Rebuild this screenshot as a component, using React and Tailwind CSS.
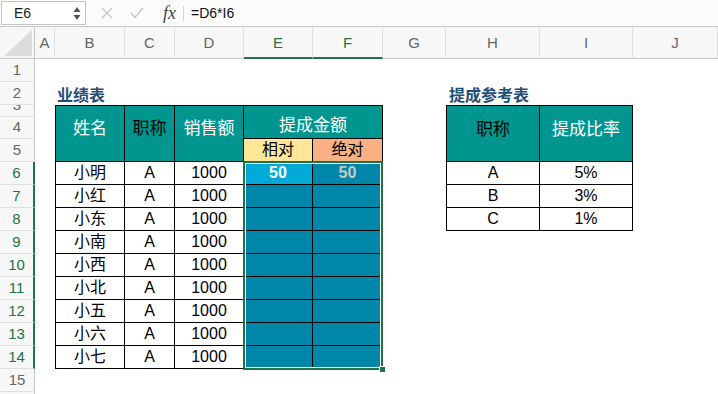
import React from "react";

const C = {
  rh: "col-start-1",
  A: "col-start-2",
  B: "col-start-3",
  Cc: "col-start-4",
  D: "col-start-5",
  E: "col-start-6",
  F: "col-start-7",
  G: "col-start-8",
  H: "col-start-9",
  I: "col-start-10",
  J: "col-start-11",
};
const R = [
  "row-start-1",
  "row-start-2",
  "row-start-3",
  "row-start-4",
  "row-start-5",
  "row-start-6",
  "row-start-7",
  "row-start-8",
  "row-start-9",
  "row-start-10",
  "row-start-11",
  "row-start-12",
  "row-start-13",
  "row-start-14",
  "row-start-15",
  "row-start-16",
  "row-start-17",
];

const GREEN = "border-[#217346]";

const colHeaders = [
  ["A", C.A],
  ["B", C.B],
  ["C", C.Cc],
  ["D", C.D],
  ["E", C.E],
  ["F", C.F],
  ["G", C.G],
  ["H", C.H],
  ["I", C.I],
  ["J", C.J],
];

const names = ["小明", "小红", "小东", "小南", "小西", "小北", "小五", "小六", "小七"];

function FormulaBar() {
  return (
    <div className="h-[27px] flex items-center border-b border-[#c6c6c6] bg-[#fbfbfb]">
      <div className="ml-px h-[24px] w-[85px] border border-[#c4c4c4] bg-white flex items-center justify-between pl-[12px] pr-[4px]">
        <span className="text-[14px] text-[#1a1a1a]">E6</span>
        <svg width="8" height="18" viewBox="0 0 8 18">
          <path d="M4 3 L7.5 8 L0.5 8 Z" fill="#555" />
          <path d="M0.5 11 L7.5 11 L4 16 Z" fill="#555" />
        </svg>
      </div>
      <svg className="ml-[15px]" width="12" height="12" viewBox="0 0 12 12">
        <path d="M1 1 L11 11 M11 1 L1 11" stroke="#c4c4c4" strokeWidth="1.3" fill="none" />
      </svg>
      <svg className="ml-[17px]" width="14" height="12" viewBox="0 0 14 12">
        <path d="M1 6 L5 10.5 L13 1" stroke="#c4c4c4" strokeWidth="1.3" fill="none" />
      </svg>
      <span className="ml-[19px] text-[18px] italic text-[#444] font-['Liberation_Serif',serif] leading-none">fx</span>
      <div className="ml-[7px] w-px h-[15px] bg-[#d4d4d4]" />
      <span className="ml-[7px] text-[14px] text-[#111]">=D6*I6</span>
    </div>
  );
}

export default function App() {
  const hdrTeal = "bg-[#00968f] flex items-center justify-center text-[17px]";
  return (
    <div className="w-[718px] h-[394px] overflow-hidden bg-white font-['Liberation_Sans','Noto_Sans_CJK_SC',sans-serif]">
      <FormulaBar />
      <div className="grid h-[367px] overflow-hidden grid-cols-[35px_20px_70px_50px_69px_69px_70px_63px_94px_93px_85px] grid-rows-[32px_23px_23px_12px_22px_23px_23px_23px_23px_23px_23px_23px_23px_23px_23px_23px_23px]">
        {/* corner */}
        <div className={`${C.rh} ${R[0]} bg-[#f7f7f7] border-r border-b border-[#c6c6c6] flex items-end justify-end pr-[2px] pb-[2px]`}>
          <svg width="28" height="26" viewBox="0 0 28 26">
            <path d="M28 0 L28 26 L0 26 Z" fill="#dcdcdc" />
          </svg>
        </div>
        {/* column headers */}
        {colHeaders.map(([l, cc]) => {
          const sel = l === "E" || l === "F";
          return (
            <div
              key={l}
              className={`${cc} ${R[0]} bg-[#f7f7f7] border-r border-[#e0e0e0] flex items-center justify-center text-[15px] pt-[2px] ${
                sel ? "text-[#217346] border-b-2 border-b-[#217346]" : "text-[#666] border-b border-b-[#c6c6c6]"
              }`}
            >
              {l}
            </div>
          );
        })}
        {/* row headers */}
        {R.slice(1).map((rc, i) => {
          const n = i + 1;
          const sel = n >= 6 && n <= 14;
          return (
            <div
              key={rc}
              className={`${C.rh} ${rc} bg-[#f7f7f7] border-b border-b-[#e0e0e0] overflow-hidden flex items-center justify-center text-[15px] ${
                sel ? "text-[#217346] border-r-2 border-r-[#217346]" : "text-[#666] border-r border-r-[#c6c6c6]"
              }`}
            >
              {n === 3 ? (
                <span className="leading-[12px] -mt-[12px]">3</span>
              ) : n <= 15 ? (
                <span>{n}</span>
              ) : null}
            </div>
          );
        })}

        {/* titles */}
        <div className={`${C.B} ${R[2]} col-span-3 flex items-end pl-[2px] pb-[1px] text-[16px] font-bold text-[#1f4e79] leading-none`}>
          业绩表
        </div>
        <div className={`${C.H} ${R[2]} col-span-2 flex items-end pl-[3px] pb-[1px] text-[16px] font-bold text-[#1f4e79] leading-none`}>
          提成参考表
        </div>

        {/* table 1 header */}
        <div className={`${C.B} ${R[3]} row-span-3 ${hdrTeal} pb-[9px] text-white border border-black`}>姓名</div>
        <div className={`${C.Cc} ${R[3]} row-span-3 ${hdrTeal} pb-[9px] text-black border-t border-r border-b border-black`}>职称</div>
        <div className={`${C.D} ${R[3]} row-span-3 ${hdrTeal} pb-[9px] text-white border-t border-r border-b border-black`}>销售额</div>
        <div className={`${C.E} ${R[3]} col-span-2 row-span-2 ${hdrTeal} pt-[7px] text-white border-t border-r border-b border-black`}>提成金额</div>
        <div className={`${C.E} ${R[5]} bg-[#ffe699] flex items-center justify-center text-[16px] text-black border-r border-b border-black`}>相对</div>
        <div className={`${C.F} ${R[5]} bg-[#f9b083] flex items-center justify-center text-[16px] text-black border-r border-b border-black`}>绝对</div>

        {/* table 1 data */}
        {names.map((nm, i) => {
          const rc = R[6 + i];
          const first = i === 0;
          return (
            <React.Fragment key={nm}>
              <div className={`${C.B} ${rc} flex items-center justify-center text-[16px] text-black border-l border-r border-b border-black`}>{nm}</div>
              <div className={`${C.Cc} ${rc} flex items-center justify-center text-[16px] text-black border-r border-b border-black`}>A</div>
              <div className={`${C.D} ${rc} flex items-center justify-center text-[16px] text-black border-r border-b border-black`}>1000</div>
              <div
                className={`${C.E} ${rc} flex items-center justify-center text-[16px] font-bold border-r border-b border-black ${
                  first ? "bg-[#00a9d6] text-white" : "bg-[#0086a9]"
                }`}
              >
                {first ? "50" : ""}
              </div>
              <div className={`${C.F} ${rc} flex items-center justify-center text-[16px] font-bold text-[#c9c9c9] bg-[#0086a9] border-r border-b border-black`}>
                {first ? "50" : ""}
              </div>
            </React.Fragment>
          );
        })}

        {/* selection */}
        <div className={`${C.E} ${R[6]} col-span-2 row-span-9 relative pointer-events-none z-10`}>
          <div className={`absolute -left-px -top-px right-0 -bottom-px border-2 ${GREEN}`}>
            <div className="absolute inset-0 border border-white" />
          </div>
          <div className="absolute -right-[3px] -bottom-[4px] w-[7px] h-[7px] bg-[#217346] border border-white" />
        </div>

        {/* table 2 */}
        <div className={`${C.H} ${R[3]} row-span-3 ${hdrTeal} pb-[8px] text-black border border-black`}>职称</div>
        <div className={`${C.I} ${R[3]} row-span-3 ${hdrTeal} pb-[8px] text-white border-t border-r border-b border-black`}>提成比率</div>
        {[
          ["A", "5%"],
          ["B", "3%"],
          ["C", "1%"],
        ].map(([a, b], i) => (
          <React.Fragment key={a}>
            <div className={`${C.H} ${R[6 + i]} flex items-center justify-center text-[16px] text-black border-l border-r border-b border-black`}>{a}</div>
            <div className={`${C.I} ${R[6 + i]} flex items-center justify-center text-[16px] text-black border-r border-b border-black`}>{b}</div>
          </React.Fragment>
        ))}
      </div>
    </div>
  );
}
